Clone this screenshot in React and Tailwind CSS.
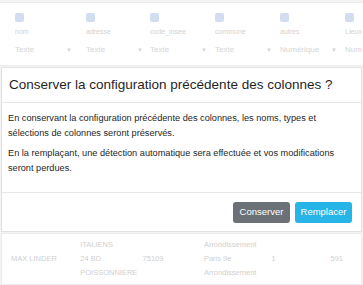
import React from 'react';

const columns = [
    { name: 'nom', type: 'Texte', w: 'w-[71px]' },
    { name: 'adresse', type: 'Texte', w: 'w-[64px]' },
    { name: 'code_insee', type: 'Texte', w: 'w-[65px]' },
    { name: 'commune', type: 'Texte', w: 'w-[65px]' },
    { name: 'autres', type: 'Numérique', w: 'w-[65px]' },
    { name: 'Lieux', type: 'Num', w: 'w-[18px]' },
];

const App = () => {
    return (
        <div className="w-[363px] h-[285px] overflow-hidden bg-[#f3f3f3] font-['Liberation_Sans',Arial,sans-serif] flex flex-col">
            {/* Tableau en arrière-plan (atténué) */}
            <div className="mt-[2px] h-[64px] bg-white border-y border-[#ececec] flex pl-[15px] pt-[10px] shrink-0 overflow-hidden">
                {columns.map((col) => (
                    <div key={col.name} className={`${col.w} shrink-0 flex flex-col overflow-hidden`}>
                        <div className="w-[9px] h-[9px] rounded-[2px] bg-[#d3ddf0]" />
                        <div className="mt-[5px] text-[7px] leading-[10px] text-[#d2d2d2] whitespace-nowrap">{col.name}</div>
                        <div className="mt-[7px] w-[57px] flex items-center justify-between text-[8px] leading-[12px] text-[#d5d5d5] whitespace-nowrap">
                            <span>{col.type}</span>
                            {col.type !== 'Num' && <span className="text-[6px]">▼</span>}
                        </div>
                    </div>
                ))}
            </div>

            {/* Fenêtre modale */}
            <div className="mt-[1px] mx-[1px] bg-white border border-[#e2e2e2] flex flex-col shrink-0">
                <div className="h-[35px] flex items-center px-[7px] border-b border-[#e6e6e6]">
                    <h5 className="text-[13.5px] text-[#1f1f1f] whitespace-nowrap">
                        Conserver la configuration précédente des colonnes ?
                    </h5>
                </div>
                <div className="px-[6px] pt-[8px] pb-[16px] text-[9.2px] leading-[15px] text-[#262626]">
                    <p>En conservant la configuration précédente des colonnes, les noms, types et sélections de colonnes seront préservés.</p>
                    <p className="mt-[5px]">En la remplaçant, une détection automatique sera effectuée et vos modifications seront perdues.</p>
                </div>
                <div className="h-[39px] border-t border-[#e6e6e6] flex items-center justify-end gap-[5px] px-[9px]">
                    <button className="h-[21px] w-[57px] rounded-[3px] bg-[#6b7177] text-white text-[9.5px]">
                        Conserver
                    </button>
                    <button className="h-[21px] w-[57px] rounded-[3px] bg-[#27b4e6] text-white text-[9.5px]">
                        Remplacer
                    </button>
                </div>
            </div>

            {/* Ligne du tableau en arrière-plan */}
            <div className="mt-[1px] mx-[1px] h-[52px] bg-white border border-[#ececec] flex items-center text-[7.5px] leading-[14px] text-[#d0d0d0] shrink-0">
                <div className="w-[79px] pl-[9px]">MAX LINDER</div>
                <div className="w-[63px]">
                    <div>ITALIENS</div>
                    <div>24 BD</div>
                    <div>POISSONNIERE</div>
                </div>
                <div className="w-[62px]">75109</div>
                <div className="w-[68px]">
                    <div>Arrondissement</div>
                    <div>Paris 9e</div>
                    <div>Arrondissement</div>
                </div>
                <div className="w-[60px]">1</div>
                <div className="flex-1 text-right pr-[18px]">591</div>
            </div>
        </div>
    );
};

export default App;
